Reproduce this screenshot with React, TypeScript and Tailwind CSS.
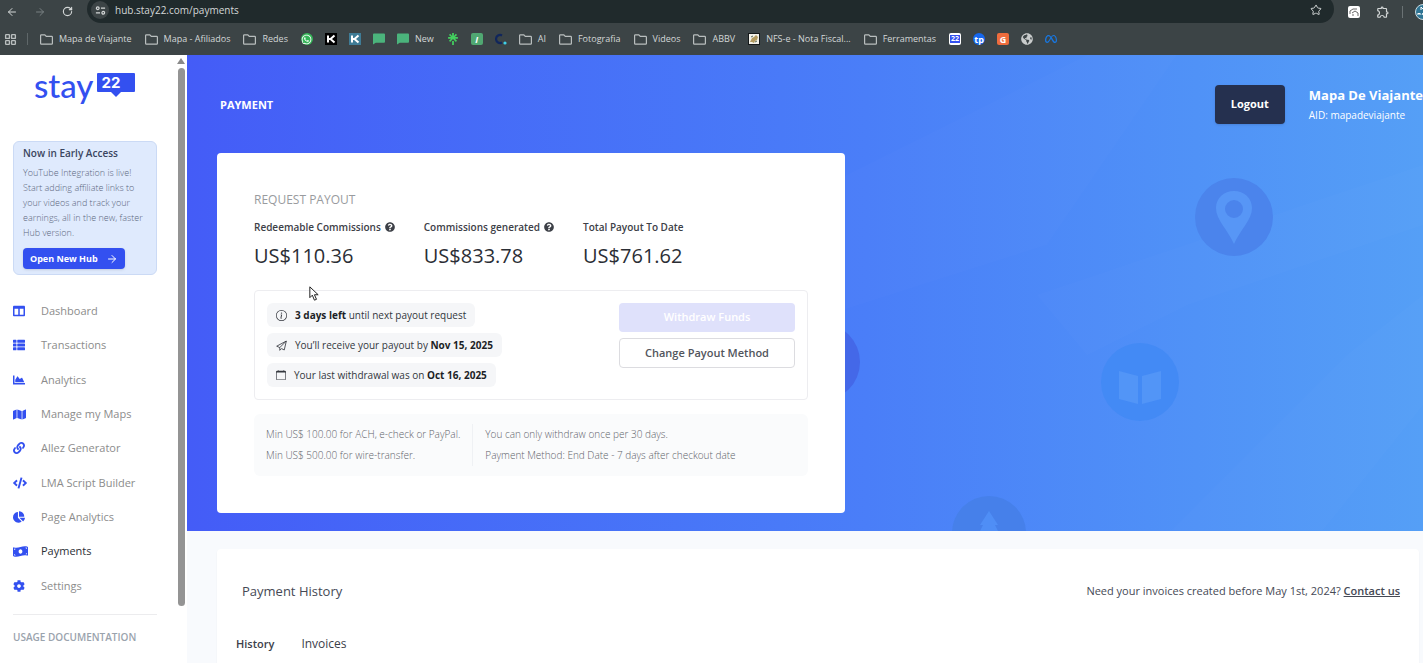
import type { ReactNode } from 'react';
import { ArrowLeft, ArrowRight, LayoutGrid, RotateCw, Star } from 'lucide-react';
import {
  FaChartArea,
  FaChartPie,
  FaCode,
  FaCog,
  FaColumns,
  FaGlobeAmericas,
  FaLink,
  FaMap,
  FaMoneyBillWave,
  FaQuestionCircle,
  FaThList,
  FaWhatsapp,
} from 'react-icons/fa';
import { FaMeta } from 'react-icons/fa6';
import { BsCalendar, BsInfoCircle } from 'react-icons/bs';
import { MdOutlineExtension } from 'react-icons/md';
import { SiLinktree } from 'react-icons/si';

const navItems = [
  { label: 'Dashboard', icon: <FaColumns size={12} /> },
  { label: 'Transactions', icon: <FaThList size={12} /> },
  { label: 'Analytics', icon: <FaChartArea size={12} /> },
  { label: 'Manage my Maps', icon: <FaMap size={13} /> },
  { label: 'Allez Generator', icon: <FaLink size={12} /> },
  { label: 'LMA Script Builder', icon: <FaCode size={14} /> },
  { label: 'Page Analytics', icon: <FaChartPie size={12} /> },
  { label: 'Payments', icon: <FaMoneyBillWave size={15} />, active: true },
  { label: 'Settings', icon: <FaCog size={12} /> },
];

const stats = [
  { label: 'Redeemable Commissions', value: 'US$110.36', help: true },
  { label: 'Commissions generated', value: 'US$833.78', help: true },
  { label: 'Total Payout To Date', value: 'US$761.62', help: false },
];

function Tile({ className, children }: { className: string; children?: ReactNode }) {
  return (
    <span className={`flex size-3 items-center justify-center overflow-hidden text-[9px] leading-none font-bold ${className}`}>
      {children}
    </span>
  );
}

function KMark() {
  return (
    <svg viewBox="0 0 12 12" className="size-3" fill="none" stroke="#fff" strokeWidth="2">
      <path d="M3 2.500v7M9.500 2.500 5.500 6l4 3.500M3 6h3" />
    </svg>
  );
}

function ChatMark() {
  return (
    <svg viewBox="0 0 13 12" className="size-3" fill="#4bb47c">
      <path d="M1 0h11a1 1 0 0 1 1 1v8a1 1 0 0 1-1 1H3l-3 2V1a1 1 0 0 1 1-1z" />
    </svg>
  );
}

const folder = (
  <svg viewBox="0 0 13 11" className="h-[11px] w-[13px]" fill="none" stroke="#b9bebe" strokeWidth="1.2">
    <path d="M.6 9.400V1.600a.8.8 0 0 1 .8-.8h3.400l1.500 1.600h5.300a.8.8 0 0 1 .8.8v6.200a.8.8 0 0 1-.8.8H1.400a.8.8 0 0 1-.8-.8z" />
  </svg>
);

const bookmarks: { label?: string; name: string; icon: ReactNode }[] = [
  { name: 'Mapa de Viajante', label: 'Mapa de Viajante', icon: folder },
  { name: 'Mapa - Afiliados', label: 'Mapa - Afiliados', icon: folder },
  { name: 'Redes', label: 'Redes', icon: folder },
  { name: 'WhatsApp', icon: <Tile className="rounded-full bg-[#35b558] text-white"><FaWhatsapp size={11} /></Tile> },
  { name: 'K', icon: <Tile className="bg-black"><KMark /></Tile> },
  { name: 'K blue', icon: <Tile className="bg-[#3f7c96]"><KMark /></Tile> },
  { name: 'Chat', icon: <ChatMark /> },
  { name: 'New', label: 'New', icon: <ChatMark /> },
  { name: 'Linktree', icon: <SiLinktree size={12} color="#43d05f" /> },
  { name: 'Invoice', icon: <Tile className="rounded-xs bg-[#50a872] text-white italic">I</Tile> },
  {
    name: 'C',
    icon: (
      <svg viewBox="0 0 12 12" className="size-3" fill="none">
        <path d="M7 2.500A4 4 0 1 0 7 9.500" stroke="#10265c" strokeWidth="2.2" />
        <circle cx="10" cy="10" r="1.6" fill="#3fd0e8" />
      </svg>
    ),
  },
  { name: 'AI', label: 'AI', icon: folder },
  { name: 'Fotografia', label: 'Fotografia', icon: folder },
  { name: 'Videos', label: 'Videos', icon: folder },
  { name: 'ABBV', label: 'ABBV', icon: folder },
  {
    name: 'NFS-e',
    label: 'NFS-e - Nota Fiscal...',
    icon: (
      <svg viewBox="0 0 12 12" className="size-3">
        <rect x=".5" y=".5" width="11" height="11" fill="#f4f2ea" stroke="#15191a" />
        <path d="m2 9 2-4 2-1 2-2 2 2-1 3-2 1-1 2-2-1z" fill="#b39b5f" />
        <path d="m3 4 2-1M7 9l2-1" stroke="#5a6b57" />
      </svg>
    ),
  },
  { name: 'Ferramentas', label: 'Ferramentas', icon: folder },
  {
    name: 'Stay22',
    icon: (
      <Tile className="rounded-xs bg-white">
        <span className="bg-[#3350f0] px-px text-[7px] leading-[8px] text-white">22</span>
      </Tile>
    ),
  },
  { name: 'Travelpayouts', icon: <Tile className="rounded-full bg-[#1667ee] text-white">tp</Tile> },
  { name: 'G', icon: <Tile className="rounded-xs bg-[#ee6c3d] text-white">G</Tile> },
  { name: 'Globe', icon: <FaGlobeAmericas size={12} color="#c9cccc" /> },
  { name: 'Meta', icon: <FaMeta size={12} color="#1877e0" /> },
];

function BrowserChrome() {
  return (
    <div className="shrink-0 overflow-hidden bg-[#3c4446] text-[#d3d7d7]">
      <div className="flex h-[23px] items-center pl-[6px]">
        <button aria-label="Back" className="mr-4"><ArrowLeft size={12} /></button>
        <button aria-label="Forward" className="mr-4 text-[#788082]"><ArrowRight size={12} /></button>
        <button aria-label="Reload" className="mr-[14px]"><RotateCw size={11} strokeWidth={2.5} /></button>
        <div className="-mt-[5px] flex h-[28px] flex-1 items-center rounded-full bg-[#202a2c] pt-[2px] pr-3 pl-1">
          <button aria-label="Site information" className="flex size-[18px] items-center justify-center rounded-full bg-[#3c4446]">
            <svg viewBox="0 0 12 12" className="size-[11px]" fill="none" stroke="currentColor" strokeWidth="1.3">
              <circle cx="3" cy="3.5" r="1.5" />
              <path d="M6.500 3.500H11M1 8.500h4.500" />
              <circle cx="9" cy="8.5" r="1.5" />
            </svg>
          </button>
          <input
            aria-label="Address"
            defaultValue="hub.stay22.com/payments"
            className="ml-[6px] min-w-0 flex-1 bg-transparent text-[10px] leading-4 outline-none"
          />
          <button aria-label="Bookmark this page"><Star size={12} /></button>
        </div>
        <Tile className="mr-[16px] ml-[14px] rounded-xs bg-white">
          <svg viewBox="0 0 12 12" className="size-3" fill="none" stroke="#6a6a6a">
            <path d="M2 8V5l3-2h4M4 7l3-2 3 2v3M4 9h2" />
          </svg>
        </Tile>
        <button aria-label="Extensions"><MdOutlineExtension size={14} /></button>
        <span className="mx-3 h-3 w-px bg-[#6a7274]" />
        <svg viewBox="0 0 16 16" className="-mr-2 size-4" aria-label="Profile">
          <circle cx="8" cy="8" r="7.5" fill="#2f7594" stroke="#c9dbe2" />
          <path d="M6 6V3l2 2 2-2v3M3 11V9l1 1 1-1v2m2 0 1-2 1 2" fill="none" stroke="#fff" />
        </svg>
      </div>
      <div className="flex h-8 items-center pl-1">
        <button aria-label="Apps"><LayoutGrid size={13} strokeWidth={2.5} className="text-[#b9bebe]" /></button>
        <span className="mr-3 ml-[10px] h-3 w-px bg-[#5f6769]" />
        <nav className="flex items-center gap-3">
          {bookmarks.map((b) => (
            <a
              key={b.name}
              href="#"
              aria-label={b.name}
              className={`flex items-center gap-[6px] text-[9px] leading-3 whitespace-nowrap ${b.label ? 'pr-px' : ''}`}
            >
              {b.icon}
              {b.label}
            </a>
          ))}
        </nav>
      </div>
    </div>
  );
}

function Logo() {
  return (
    <a href="#" aria-label="stay22" className="ml-[21px] flex h-10 items-start text-[#3350f0]">
      <span className="font-[Lato] text-[33px] leading-[30px] font-medium">stay</span>
      <span className="relative mt-[3px] ml-1 h-[19px] w-[38px] rounded-[1px] bg-[#3350f0] pl-1 font-[Inter] text-[15px] leading-[19px] font-bold text-white">
        22
        <svg viewBox="0 0 10 5" className="absolute top-[19px] left-[14px] h-[5px] w-[10px]" fill="#3350f0">
          <path d="M0 0h10L5 5z" />
        </svg>
      </span>
    </a>
  );
}

function Sidebar() {
  return (
    <aside className="flex w-[187px] shrink-0 bg-white">
      <div className="flex-1 overflow-hidden pt-[15px] pr-[20px] pl-[13px]">
        <Logo />
        <section className="mt-[31px] rounded-md border border-[#cbdaf5] bg-[#dfeafd] px-[9px] pt-[3px] pb-[5px]">
          <h2 className="text-[10px] leading-4 font-semibold text-[#3a4560]">Now in Early Access</h2>
          <p className="mt-1 text-[9px] leading-[15px] font-light whitespace-nowrap text-[#5c6880]">
            YouTube Integration is live!
            <br />
            Start adding affiliate links to
            <br />
            your videos and track your
            <br />
            earnings, all in the new, faster
            <br />
            Hub version.
          </p>
          <button className="mt-2 flex h-[21px] items-center gap-2 rounded-sm bg-[#3350f0] px-[7px] text-[9px] font-bold text-white shadow-sm">
            Open New Hub
            <ArrowRight size={12} />
          </button>
        </section>
        <nav className="mt-[19px] grid h-[309px] auto-rows-fr">
          {navItems.map((item) => (
            <a
              key={item.label}
              href="#"
              className={`flex items-center text-[11px] leading-4 ${item.active ? 'text-[#2c2f36]' : 'text-[#8c8c8c]'}`}
            >
              <span className="w-7 text-[#3350f0]">{item.icon}</span>
              {item.label}
            </a>
          ))}
        </nav>
        <div className="mt-[11px] border-t border-[#ececee] pt-[14px] text-[10px] leading-4 font-semibold whitespace-nowrap text-[#9aa3ad]">
          USAGE DOCUMENTATION
        </div>
      </div>
      <div className="flex w-[10px] flex-col items-start pt-[3px]">
        <svg viewBox="0 0 8 6" className="h-[6px] w-2" fill="#8a8a8a">
          <path d="M4 0 8 6H0z" />
        </svg>
        <div className="mt-1 ml-px h-[89%] w-[7px] rounded-full bg-[#949494]" />
      </div>
    </aside>
  );
}

// Faint map shapes and place markers behind the hero
function HeroMap() {
  return (
    <svg className="absolute inset-0 h-full w-full" aria-hidden="true">
      <path d="M640 130 900 0h90L860 190 640 260z" fill="#fff" opacity=".01" />
      <path d="M850 240 1236 110v60L1000 250 900 300z" fill="#fff" opacity=".015" />
      <path d="M985 475 1100 360l60-60 76-60v110l-100 125z" fill="#fff" opacity=".015" />
      <circle cx="634" cy="307" r="39" fill="#4468e8" />
      <circle cx="1047" cy="162" r="39" fill="#4b84ec" />
      <path
        d="M1047 136c-10 0-18 7-18 17 0 12 12 22 18 36 6-14 18-24 18-36 0-10-8-17-18-17zm0 9a9 9 0 1 1 0 18 9 9 0 0 1 0-18z"
        fill="#5796f6"
      />
      <circle cx="953" cy="327" r="39" fill="#438af5" />
      <path d="m932 316 19 5v28l-19-5zM974 316l-19 5v28l19-5z" fill="#5295f7" />
      <circle cx="802" cy="478" r="37" fill="#4680ea" />
      <path d="m802 456 9 14h-3l6 12h-24l6-12h-3z" fill="#4f8ef6" />
    </svg>
  );
}

function PlaneIcon() {
  return (
    <svg viewBox="0 0 16 16" className="size-[11px]" fill="none" stroke="currentColor" strokeWidth="1.2" strokeLinejoin="round">
      <path d="M1 9 15 1.500l-3 13-4-2L5.500 15v-4zM5.500 11 15 1.500" />
    </svg>
  );
}

function Pill({ icon, children }: { icon: ReactNode; children: ReactNode }) {
  return (
    <div className="flex h-6 items-center gap-2 rounded-md bg-[#f5f6f8] px-[9px] text-[10px] leading-4 whitespace-nowrap text-[#33363d]">
      {icon}
      <span>{children}</span>
    </div>
  );
}

function PayoutCard() {
  return (
    <section className="relative ml-[30px] w-full max-w-[628px] rounded bg-white px-[37px] pt-[39px] pb-[37px]">
      <h2 className="text-[12px] leading-4 font-medium text-[#999b9e]">REQUEST PAYOUT</h2>
      <div className="mt-[11px] flex gap-[29px]">
        {stats.map((s) => (
          <div key={s.label}>
            <div className="flex items-center gap-1 text-[10px] leading-4 font-semibold text-[#3d4047]">
              {s.label}
              {s.help && <FaQuestionCircle size={10} />}
            </div>
            <div className="mt-[9px] text-[20px] leading-6 font-medium text-[#2b2e35]">{s.value}</div>
          </div>
        ))}
      </div>

      <div className="mt-[22px] flex items-start justify-between rounded border border-[#ededf0] p-3">
        <div className="flex flex-col items-start gap-[6px]">
          <Pill icon={<BsInfoCircle size={11} />}>
            <b className="font-bold text-[#1c1f26]">3 days left</b> until next payout request
          </Pill>
          <Pill icon={<PlaneIcon />}>
            You’ll receive your payout by <b className="font-bold text-[#1c1f26]">Nov 15, 2025</b>
          </Pill>
          <Pill icon={<BsCalendar size={10} />}>
            Your last withdrawal was on <b className="font-bold text-[#1c1f26]">Oct 16, 2025</b>
          </Pill>
        </div>
        <div className="flex w-[176px] flex-col gap-[6px] text-[11px] font-semibold">
          <button disabled className="h-[29px] rounded bg-[#dfe1fb] text-white">Withdraw Funds</button>
          <button className="h-[30px] rounded border border-[#dcdce0] bg-white text-[#52555c]">Change Payout Method</button>
        </div>
      </div>

      <div className="mt-[14px] flex rounded-md bg-[#fafbfc] px-3 py-[10px] text-[10px] leading-[21px] font-light whitespace-nowrap text-[#5f636b]">
        <div className="border-r border-[#eff1f4] pr-3">
          <p>Min US$ 100.00 for ACH, e-check or PayPal.</p>
          <p>Min US$ 500.00 for wire-transfer.</p>
        </div>
        <div className="pl-3">
          <p>You can only withdraw once per 30 days.</p>
          <p>Payment Method: End Date - 7 days after checkout date</p>
        </div>
      </div>
    </section>
  );
}

export default function App() {
  return (
    <div className="flex h-screen flex-col overflow-hidden font-['Open_Sans',sans-serif]">
      <BrowserChrome />
      <div className="flex min-h-0 flex-1">
        <Sidebar />
        <main className="min-w-0 flex-1 overflow-hidden bg-[#f8fafd]">
          <div className="relative overflow-hidden bg-linear-to-r from-[#445cf7] via-[#4a7ef8] via-55% to-[#559ff6] pb-[18px]">
            <HeroMap />
            <header className="relative flex h-[98px] items-center pt-px pl-[33px] text-white">
              <h1 className="flex-1 text-[11px] leading-4 font-bold">PAYMENT</h1>
              <button className="h-[39px] w-[70px] rounded bg-[#25304f] text-[11px] font-bold shadow-sm">Logout</button>
              <div className="ml-6 shrink-0 whitespace-nowrap">
                <div className="text-[13px] leading-5 font-bold">Mapa De Viajante</div>
                <div className="text-[10px] leading-5">AID: mapadeviajante</div>
              </div>
            </header>
            <PayoutCard />
          </div>

          <section className="mt-[18px] mr-1 ml-[30px] h-full rounded bg-white px-[19px] pt-8 shadow-xs">
            <div className="flex items-center justify-between pl-[6px] leading-5 text-[#454955]">
              <h2 className="text-[13px] font-medium">Payment History</h2>
              <p className="text-[11px]">
                Need your invoices created before May 1st, 2024?{' '}
                <a href="#" className="font-semibold underline">Contact us</a>
              </p>
            </div>
            <div role="tablist" className="mt-[33px] flex items-center gap-[27px] leading-5 text-[#3c404a]">
              <button role="tab" aria-selected="true" className="text-[11px] font-semibold">History</button>
              <button role="tab" aria-selected="false" className="text-[12px]">Invoices</button>
            </div>
          </section>
        </main>
      </div>

      <svg viewBox="0 0 12 18" className="absolute top-[286px] left-[309px] h-[15px] w-[10px]" fill="#fff" stroke="#222" strokeWidth="1.2">
        <path d="M1 1v13l3-3 2.500 6 2.500-1-2.500-5.500H11z" />
      </svg>
    </div>
  );
}
